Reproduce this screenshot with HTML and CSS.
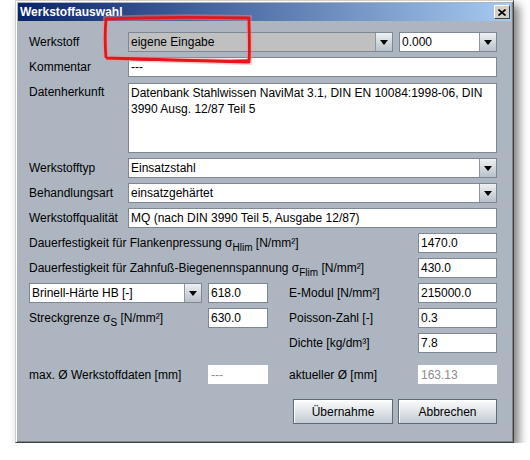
FILE: index.html
```html
<!DOCTYPE html>
<html lang="de">
<head>
  <meta charset="utf-8">
  <link rel="stylesheet" href="styles.css">
</head>
<body>
  <div class="window">
    <div class="titlebar">
      <span class="title">Werkstoffauswahl</span>
      <span class="close">
        <svg width="8" height="7" viewBox="0 0 8 7"><path d="M0.5 0.5 L7.5 6.5 M7.5 0.5 L0.5 6.5" stroke="#000" stroke-width="1.6"/></svg>
      </span>
    </div>

    <div class="content">
      <div class="row first">
        <span class="lbl">Werkstoff</span>
        <div class="combo grey wide"><span class="val">eigene Eingabe</span><span class="arrow"></span></div>
        <div class="combo small"><span class="val">0.000</span><span class="arrow"></span></div>
      </div>

      <div class="row">
        <span class="lbl">Kommentar</span>
        <div class="field grow">---</div>
      </div>

      <div class="row area-row">
        <span class="lbl">Datenherkunft</span>
        <div class="area">Datenbank Stahlwissen NaviMat 3.1, DIN EN 10084:1998-06, DIN<br>3990 Ausg. 12/87 Teil 5</div>
      </div>

      <div class="row">
        <span class="lbl">Werkstofftyp</span>
        <div class="combo grow"><span class="val">Einsatzstahl</span><span class="arrow"></span></div>
      </div>

      <div class="row">
        <span class="lbl">Behandlungsart</span>
        <div class="combo grow"><span class="val">einsatzgehärtet</span><span class="arrow"></span></div>
      </div>

      <div class="row">
        <span class="lbl">Werkstoffqualität</span>
        <div class="field grow">MQ (nach DIN 3990 Teil 5, Ausgabe 12/87)</div>
      </div>

      <div class="row">
        <span class="lbl grow">Dauerfestigkeit für Flankenpressung σ<sub>Hlim</sub> [N/mm²]</span>
        <div class="field num">1470.0</div>
      </div>

      <div class="row">
        <span class="lbl grow">Dauerfestigkeit für Zahnfuß-Biegenennspannung σ<sub>Flim</sub> [N/mm²]</span>
        <div class="field num">430.0</div>
      </div>

      <div class="grid">
        <div class="combo brinell"><span class="val">Brinell-Härte HB [-]</span><span class="arrow"></span></div>
        <div class="field short">618.0</div>
        <span class="lbl">E-Modul [N/mm²]</span>
        <div class="field">215000.0</div>

        <span class="lbl">Streckgrenze σ<sub>S</sub> [N/mm²]</span>
        <div class="field short">630.0</div>
        <span class="lbl">Poisson-Zahl [-]</span>
        <div class="field">0.3</div>

        <span class="lbl col3">Dichte [kg/dm³]</span>
        <div class="field">7.8</div>
      </div>

      <div class="grid lower">
        <span class="lbl">max. Ø Werkstoffdaten [mm]</span>
        <div class="field short off">---</div>
        <span class="lbl">aktueller Ø [mm]</span>
        <div class="field off">163.13</div>
      </div>

      <div class="buttons">
        <button class="btn ok">Übernahme</button>
        <button class="btn cancel">Abbrechen</button>
      </div>
    </div>
  </div>

  <svg class="marker" width="530" height="460" viewBox="0 0 530 460">
    <path d="M106 58 C105 45 105 30 106 19 C150 17 200 17 249 18 C249 32 250 48 249 62 C200 61 150 59 106 58"
          fill="none" stroke="#f08c8c" stroke-width="6" opacity="0.45"/>
    <path d="M106 58 C105 45 105 30 106 19 C150 17 200 17 249 18 C249 32 250 48 249 62 C200 61 150 59 106 58"
          fill="none" stroke="#e3161b" stroke-width="2.8" stroke-linejoin="round"/>
    <path d="M130 59.5 C175 60.5 215 61.5 248 60" fill="none" stroke="#e3161b" stroke-width="1.6"/>
  </svg>
</body>
</html>
```

FILE: styles.css
```css
* {
  box-sizing: border-box;
}

body {
  margin: 0;
  background: #fff;
  font-family: "Liberation Sans", Arial, sans-serif;
  font-size: 12px;
  color: #000;
}

.window {
  margin-left: 15px;
  width: 499px;
  height: 443px;
  padding: 2px;
  background: #adb6c0;
  border: 1px solid;
  border-color: #d4d0c8 #404040 #404040 #d4d0c8;
  box-shadow: inset 1px 1px #fff, inset -1px -1px #808080, 5px 5px 9px rgba(0, 0, 0, 0.5);
}

.titlebar {
  height: 18px;
  display: flex;
  align-items: center;
  justify-content: space-between;
  padding: 0 1px 0 2px;
  background: linear-gradient(to right, #0a246a, #a6caf0);
}

.title {
  color: #fff;
  font-weight: bold;
  font-size: 12px;
}

.close {
  width: 16px;
  height: 14px;
  display: flex;
  align-items: center;
  justify-content: center;
  background: #d4d0c8;
  border: 1px solid;
  border-color: #fff #404040 #404040 #fff;
}

.content {
  padding: 11px 14px 0 11px;
}

.row {
  display: flex;
  align-items: center;
  height: 20px;
  margin-top: 5px;
}

.row.first {
  margin-top: 0;
}

.lbl {
  width: 99px;
  flex-shrink: 0;
  white-space: nowrap;
}

.lbl.grow,
.grow {
  flex: 1;
}

sub {
  font-size: 10px;
  vertical-align: -4px;
  line-height: 0;
}

.field {
  height: 20px;
  display: flex;
  align-items: center;
  padding: 0 2px;
  background: #fff;
  border: 1px solid #7d8894;
  white-space: nowrap;
}

.field.num {
  width: 79px;
}

.field.off {
  border-color: #fff;
  color: #8c8c8c;
}

.area-row {
  height: 70px;
  align-items: flex-start;
  margin-top: 6px;
}

.area-row .lbl {
  padding-top: 2px;
}

.area {
  flex: 1;
  height: 70px;
  padding: 1px 2px;
  line-height: 16px;
  background: #fff;
  border: 1px solid #7d8894;
}

.combo {
  height: 20px;
  display: flex;
  background: #fff;
  border: 1px solid #7d8894;
}

.combo.grey {
  background: #c0c0c0;
}

.combo.wide {
  width: 265px;
  margin-right: 6px;
}

.combo.small {
  flex: 1;
}

.combo .val {
  flex: 1;
  display: flex;
  align-items: center;
  padding: 0 2px;
  white-space: nowrap;
}

.arrow {
  width: 17px;
  display: flex;
  align-items: center;
  justify-content: center;
  border-left: 1px solid #8c96a0;
  background: linear-gradient(#eef1f4, #b8c0c9);
}

.arrow::after {
  content: "";
  border-left: 4px solid transparent;
  border-right: 4px solid transparent;
  border-top: 5px solid #000;
}

.grid {
  display: grid;
  grid-template-columns: 179px 81px 129px 79px;
  grid-auto-rows: 20px;
  row-gap: 5px;
  margin-top: 5px;
  align-items: center;
}

.grid .lbl {
  width: auto;
}

.grid .col3 {
  grid-column: 3;
}

.grid.lower {
  margin-top: 12px;
  grid-auto-rows: 19px;
}

.grid.lower .field {
  height: 19px;
}

.combo.brinell {
  width: 173px;
}

.field.short {
  width: 60px;
}

.buttons {
  display: flex;
  justify-content: flex-end;
  gap: 5px;
  margin-top: 15px;
}

.btn {
  height: 25px;
  font-family: "Liberation Sans", Arial, sans-serif;
  font-size: 12px;
  color: #000;
  background: linear-gradient(#fbfcfd, #c4cbd3);
  border: 1px solid #5f6a76;
  box-shadow: inset 1px 1px #fff;
  padding: 0;
}

.btn.ok {
  width: 100px;
}

.btn.cancel {
  width: 99px;
}

.marker {
  position: absolute;
  top: 0;
  left: 0;
  pointer-events: none;
}
```
